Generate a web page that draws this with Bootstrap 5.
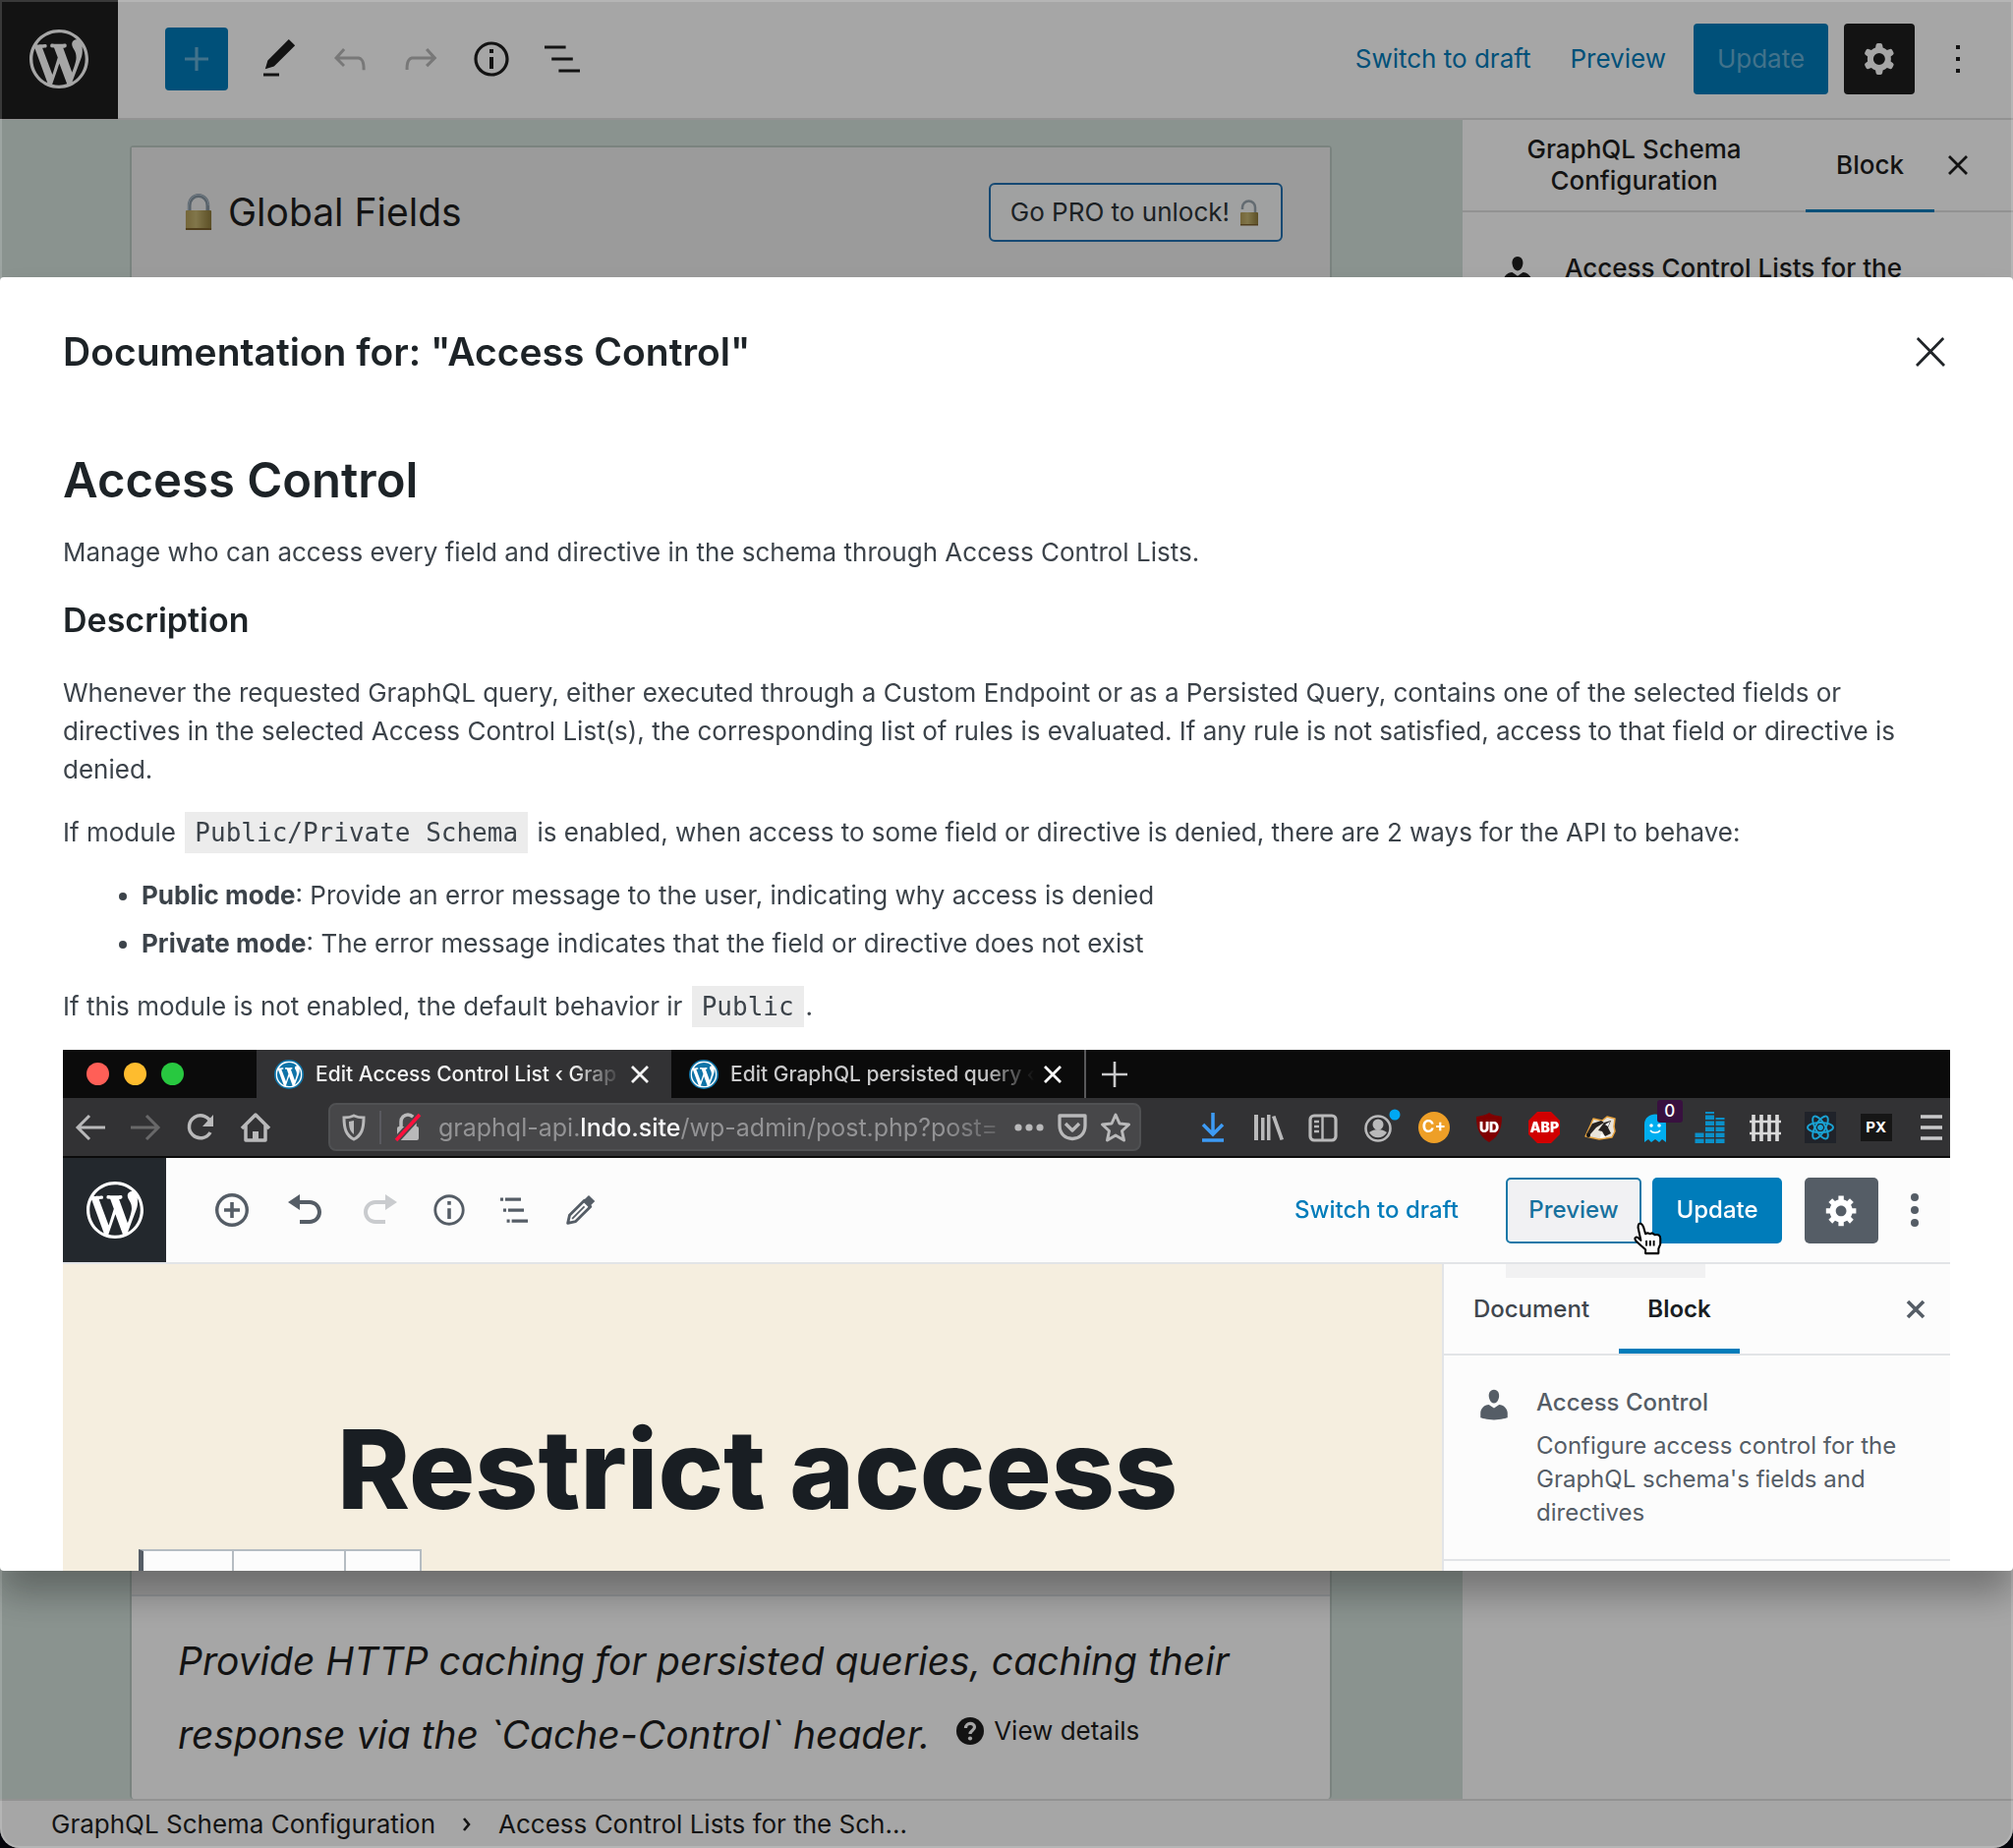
<!DOCTYPE html>
<html lang="en">
<head>
<meta charset="utf-8">
<meta name="viewport" content="width=device-width, initial-scale=1">
<title>GraphQL Schema Configuration</title>
<link href="https://cdn.jsdelivr.net/npm/bootstrap@5.3.0/dist/css/bootstrap.min.css" rel="stylesheet">
<style>
  :root { --wp-blue: #007cba; --ink: #1e1e1e; --line: #e0e0e0; }
  html { background: #05060c; }
  body { font-family: Inter, "Liberation Sans", sans-serif; font-size: 26px; line-height: 32px; color: var(--ink); background: #05060c; overflow: hidden; }
  svg { display: block; flex: none; fill: currentColor; }
  .i48 { width: 48px; height: 48px; }
  .stroke { fill: none; stroke: currentColor; }
  button, a { font-size: inherit; }
  .plain { border: 0; background: none; padding: 0; color: inherit; display: flex; align-items: center; justify-content: center; line-height: inherit; }
  a { color: var(--wp-blue); text-decoration: none; }

  /* editor */
  .editor { min-height: 100vh; background: #fff; }
  .topbar { height: 122px; border-bottom: 2px solid var(--line); }
  .wp-home { width: 120px; height: 122px; background: var(--ink); color: #fff; }
  .wp-home svg { width: 60px; height: 60px; }
  .tools { padding-left: 48px; gap: 8px; }
  .tools button { width: 64px; height: 64px; }
  .tools .add { background: var(--wp-blue); color: #66b0d6; border-radius: 4px; margin-right: 12px; }
  .tools .off { color: #b8b8b8; }
  .actions { padding-right: 32px; }
  .actions .update { width: 137px; height: 72px; background: var(--wp-blue); color: #66b0d6; border-radius: 4px; }
  .actions .settings { width: 72px; height: 72px; background: var(--ink); color: #fff; border-radius: 4px; }
  .canvas { background: #d4e2dc; padding: 26px 133px 0 132px; }
  .block-box { border: 2px solid #bccac4; border-bottom: 0; border-radius: 4px; background: #fff; }
  .block-head { background: #efefef; }
  .block-title { font-size: 39px; line-height: 48px; gap: 16px; padding: 36px 48px 36px 54px; }
  .pro { height: 60px; border: 2px solid #2271b1; border-radius: 6px; background: #f6f7f7; color: #2c3338; font-size: 26px; gap: 10px; padding: 0 22px 0 20px; }
  .block-copy { font-size: 39px; line-height: 75px; font-style: italic; padding: 28px 47px; }
  .details-link { font-size: 26px; font-style: normal; color: var(--ink); margin-left: 16px; vertical-align: 4px; gap: 10px; line-height: 32px; }
  .side { width: 560px; }
  .side-tabs { height: 94px; border-bottom: 2px solid var(--line); padding-right: 32px; }
  .side-tabs button { font-weight: 500; }
  .side-tabs .on { width: 131px; margin-bottom: -2px; border-bottom: 3px solid var(--wp-blue); }
  .side-tabs .shut { width: 48px; }
  .side-block { padding: 41px 32px; gap: 28px; font-weight: 500; }
  .crumbs { height: 50px; border-top: 2px solid var(--line); padding: 0 52px; gap: 24px; }
  .crumbs a { color: var(--ink); }

  /* dialog */
  .shade { position: fixed; inset: 0; background: rgba(0,0,0,.35); z-index: 5; border-radius: 0 0 20px 20px; box-shadow: inset 0 0 0 2px rgba(255,255,255,.16), 0 0 0 40px #05060c; }
  .doc { position: fixed; top: 15%; left: 0; right: 0; height: 70%; z-index: 6; background: #fff; border-radius: 4px; box-shadow: 0 24px 36px rgba(0,0,0,.3); overflow: hidden; color: #3c434a; }
  .doc-head { height: 152px; padding: 0 60px 0 64px; color: #1d2327; }
  .doc-head h1 { font-size: 39px; line-height: 48px; font-weight: 600; }
  .doc-body { padding: 24px 64px 0; line-height: 39px; }
  .doc-body h2 { font-size: 49px; line-height: 62px; font-weight: 600; margin: 0 0 22px; color: #1d2327; }
  .doc-body h3 { font-size: 34px; line-height: 44px; font-weight: 600; margin: 28px 0 32px; color: #1d2327; }
  .doc-body p, .doc-body ul { margin-bottom: 25px; }
  .doc-body ul { padding-left: 80px; }
  .doc-body li + li { margin-top: 10px; }
  .doc-body code { font-family: "DejaVu Sans Mono", monospace; font-size: 26px; line-height: 1; color: #3c434a; background: #ececec; padding: 6px 10px; margin: 0 2px; }

  /* illustration in the documentation */
  .shot { color: #555d66; line-height: 34px; font-size: 24px; }
  .tabstrip { height: 49px; background: #0b0b0b; color: #c9c9ca; font-size: 21px; }
  .lights { width: 197px; padding-left: 24px; gap: 15px; }
  .lights i { width: 23px; height: 23px; border-radius: 50%; }
  .tab { width: 422px; padding: 0 22px 0 18px; gap: 12px; }
  .tab.on { background: #323234; color: #f4f4f4; }
  .tab + .tab { border-right: 2px solid #58585a; }
  .tab span { flex: 1; min-width: 0; margin-right: -10px; white-space: nowrap; font-weight: 500; -webkit-mask-image: linear-gradient(90deg,#000 82%,transparent 98%); mask-image: linear-gradient(90deg,#000 82%,transparent 98%); }
  .navline { height: 61px; background: #323234; border-bottom: 2px solid #0b0b0b; color: #b9b9ba; padding: 0 3px 0 12px; }
  .navline .nav-buttons { gap: 24px; width: 258px; }
  .i32 { width: 32px; height: 32px; }
  .urlbox { width: 827px; height: 49px; background: #474749; border: 2px solid #505153; border-radius: 8px; gap: 12px; padding: 0 8px 0 10px; }
  .urlbox .address { font-size: 25px; padding-left: 4px; color: #939395; white-space: nowrap; flex: 1; min-width: 0; -webkit-mask-image: linear-gradient(90deg,#000 90%,transparent 104%); mask-image: linear-gradient(90deg,#000 90%,transparent 104%); }
  .urlbox .address b { font-weight: 500; color: #f9f9fa; }
  .bar-sep { width: 2px; height: 34px; background: #59595f; }
  .ext { margin-left: 57px; }
  .ext > span { width: 32px; height: 32px; position: relative; display: flex; align-items: center; justify-content: center; font-weight: 700; color: #fff; line-height: 1; }
  .ext .cplus { background: #ee9f27; border-radius: 50%; font-size: 17px; }
  .ext .px { background: #161616; font-size: 15px; height: 28px; }
  .ext .count { position: absolute; left: 18px; top: -12px; width: 26px; height: 23px; background: #38103f; border-radius: 3px; font-size: 17px; line-height: 23px; text-align: center; font-weight: 500; }
  .ext .over { position: absolute; inset: 0; display: flex; align-items: center; justify-content: center; font-size: 14px; }
  .shot-bar { height: 108px; background: #fcfcfc; border-bottom: 2px solid #e2e4e7; }
  .shot-home { width: 105px; height: 106px; background: #23282d; color: #fff; }
  .shot-home svg { width: 58px; height: 58px; }
  .shot-tools { padding-left: 47px; gap: 35px; }
  .shot-tools svg { width: 40px; height: 40px; }
  .shot-tools .i32 { width: 32px; height: 32px; overflow: visible; }
  .shot-actions { font-weight: 500; padding-right: 16px; }
  .shot-actions .preview { position: relative; width: 138px; height: 67px; border: 2px solid #1a78a8; border-radius: 5px; background: #f1f1f3; color: #17719e; font-weight: 500; }
  .shot-actions .upd { width: 132px; height: 67px; border-radius: 5px; background: var(--wp-blue); color: #fff; margin: 0 23px 0 11px; font-weight: 500; }
  .shot-actions .cog { width: 75px; height: 67px; border-radius: 5px; background: #555d66; color: #fff; margin-right: 17px; }
  .pointer { position: absolute; left: 126px; top: 43px; width: 32px; height: 34px; }
  .shot-page { background: #f5eedf; padding-top: 146px; }
  .shot-page h4 { font-size: 112px; line-height: 124px; font-weight: 800; color: #191e23; margin: 0 0 20px 279px; }
  .cells { margin-left: 77px; width: 288px; height: 60px; border: 2px solid #b5bcc2; border-left: 5px solid #555d66; background: #fcfcfc; }
  .cells i { border-right: 2px solid #b5bcc2; width: 92px; }
  .cells i + i { width: 114px; }
  .shot-side { width: 517px; background: #fcfcfc; border-left: 2px solid #e2e4e7; }
  .shot-side .tip { position: absolute; left: 63px; top: 0; width: 203px; height: 14px; background: #f1f1f2; }
  .shot-tabs { height: 93px; border-bottom: 2px solid #e2e4e7; padding: 0 16px 0 0; position: relative; }
  .shot-tabs .doctab { width: 178px; color: #40464d; font-weight: 500; }
  .shot-tabs .blocktab { width: 123px; font-weight: 600; color: #191e23; border-bottom: 5px solid var(--wp-blue); border-top: 5px solid transparent; }
  .shot-info { padding: 31px 40px 30px 32px; gap: 24px; border-bottom: 2px solid #e2e4e7; }
  .shot-info strong { font-weight: 500; display: block; margin-bottom: 10px; }
</style>
<script src="https://cdn.jsdelivr.net/npm/bootstrap@5.3.0/dist/js/bootstrap.bundle.min.js"></script>
</head>
<body>
<svg width="0" height="0" class="position-absolute" aria-hidden="true">
  <symbol id="wp" viewBox="0 0 20 20"><path d="M20 10c0-5.51-4.49-10-10-10C4.48 0 0 4.49 0 10c0 5.52 4.48 10 10 10 5.51 0 10-4.48 10-10zM7.78 15.37L4.37 6.22c.55-.02 1.17-.08 1.17-.08.5-.06.44-1.13-.06-1.11 0 0-1.45.11-2.37.11-.18 0-.37 0-.58-.01C4.12 2.69 6.87 1.11 10 1.11c2.33 0 4.45.87 6.05 2.34-.68-.11-1.65.39-1.65 1.58 0 .74.45 1.36.9 2.1.35.61.55 1.36.55 2.46 0 1.49-1.4 5-1.4 5l-3.03-8.37c.54-.02.82-.17.82-.17.5-.05.44-1.25-.06-1.22 0 0-1.44.12-2.38.12-.87 0-2.33-.12-2.33-.12-.5-.03-.56 1.2-.06 1.22l.92.08 1.26 3.41zM17.41 10c.24-.64.74-1.87.43-4.25.7 1.29 1.05 2.71 1.05 4.25 0 3.29-1.73 6.24-4.4 7.78.97-2.59 1.94-5.2 2.92-7.78zM6.1 18.09C3.12 16.65 1.11 13.53 1.11 10c0-1.3.23-2.48.72-3.59C3.25 10.3 4.67 14.2 6.1 18.09zm4.03-6.63l2.58 6.98c-.86.29-1.76.45-2.71.45-.79 0-1.57-.11-2.29-.33.81-2.38 1.62-4.74 2.42-7.1z"/></symbol>
  <symbol id="close" viewBox="0 0 24 24"><path d="M13 11.8l6.1-6.3-1-1-6.1 6.2-6.1-6.2-1 1 6.1 6.3-6.5 6.7 1 1 6.5-6.6 6.5 6.6 1-1z"/></symbol>
  <symbol id="user" viewBox="0 0 20 20"><path d="M10 9.25c-2.27 0-2.73-3.44-2.73-3.44C7 4.02 7.82 2 9.97 2c2.16 0 2.98 2.02 2.71 3.81 0 0-.41 3.44-2.68 3.44zm0 2.57L12.72 10c2.39 0 4.52 2.33 4.52 4.53v2.49s-3.65 1.13-7.24 1.13c-3.65 0-7.24-1.13-7.24-1.13v-2.49c0-2.25 1.94-4.48 4.47-4.48z"/></symbol>
  <symbol id="info" viewBox="0 0 24 24"><path d="M12 3.2c-4.8 0-8.8 3.9-8.8 8.8 0 4.8 3.9 8.8 8.8 8.8 4.8 0 8.8-3.9 8.8-8.8 0-4.8-4-8.8-8.8-8.8zm0 16c-4 0-7.2-3.3-7.2-7.2C4.8 8 8 4.8 12 4.8s7.2 3.3 7.2 7.2c0 4-3.2 7.2-7.2 7.2zM11 17h2v-6h-2v6zm0-8h2V7h-2v2z"/></symbol>
  <linearGradient id="brass"><stop offset="0" stop-color="#b39d58"/><stop offset=".4" stop-color="#c7b673"/><stop offset="1" stop-color="#8d7a3a"/></linearGradient>
</svg>

<div class="editor d-flex flex-column">
  <header class="topbar d-flex align-items-center">
    <a href="#" class="wp-home d-flex align-items-center justify-content-center" aria-label="Dashboard"><svg><use href="#wp"/></svg></a>
    <div class="tools d-flex align-items-center me-auto">
      <button class="plain add" aria-label="Add block"><svg class="i48" viewBox="0 0 24 24"><path d="M18 11.2h-5.2V6h-1.6v5.2H6v1.6h5.2V18h1.6v-5.2H18z"/></svg></button>
      <button class="plain" aria-label="Edit"><svg class="i48" viewBox="0 0 24 24"><path d="M20.1 5.1L16.9 2 6.2 12.7l-1.3 4.4 4.5-1.3L20.1 5.1zM4 20.8h8v-1.5H4v1.5z"/></svg></button>
      <button class="plain off" aria-label="Undo"><svg class="i48" viewBox="0 0 24 24"><path d="M18.3 11.7c-.6-.6-1.4-.9-2.3-.9H6.7l2.9-3.3-1.1-1-4.5 5L8.5 16l1-1-2.7-2.7H16c.5 0 .9.2 1.3.5 1 1 1 3.4 1 4.5v.3h1.5v-.2c0-1.5 0-4.3-1.5-5.7z"/></svg></button>
      <button class="plain off" aria-label="Redo"><svg class="i48" viewBox="0 0 24 24"><path d="M15.6 6.5l-1.1 1 2.9 3.3H8c-.9 0-1.7.3-2.3.9-1.4 1.5-1.4 4.2-1.4 5.6v.2h1.5v-.3c0-1.1 0-3.5 1-4.5.3-.3.7-.5 1.3-.5h9.2L14.5 15l1.1 1.1 4.6-4.6-4.6-5z"/></svg></button>
      <button class="plain" aria-label="Details"><svg class="i48"><use href="#info"/></svg></button>
      <button class="plain" aria-label="List view"><svg class="i48" viewBox="0 0 24 24"><path d="M13.8 5.2H3v1.5h10.8V5.2zm-3.6 12v1.5H21v-1.5H10.2zm7.2-6H6.6v1.5h10.8v-1.5z"/></svg></button>
    </div>
    <div class="actions d-flex align-items-center">
      <a href="#" class="me-4 pe-3">Switch to draft</a>
      <a href="#" class="me-4 pe-1">Preview</a>
      <button class="plain update me-3">Update</button>
      <button class="plain settings" aria-label="Settings"><svg class="i48" viewBox="0 0 24 24"><path fill-rule="evenodd" d="M10.289 4.836A1 1 0 0111.275 4h1.306a1 1 0 01.987.836l.244 1.466c.787.26 1.503.679 2.108 1.218l1.393-.522a1 1 0 011.216.437l.653 1.13a1 1 0 01-.23 1.273l-1.148.944a6.025 6.025 0 010 2.435l1.149.946a1 1 0 01.23 1.272l-.653 1.13a1 1 0 01-1.216.437l-1.394-.522c-.605.54-1.32.958-2.108 1.218l-.244 1.466a1 1 0 01-.987.836h-1.306a1 1 0 01-.986-.836l-.244-1.466a5.995 5.995 0 01-2.108-1.218l-1.394.522a1 1 0 01-1.217-.436l-.653-1.131a1 1 0 01.23-1.272l1.149-.946a6.026 6.026 0 010-2.435l-1.148-.944a1 1 0 01-.23-1.272l.653-1.131a1 1 0 011.217-.437l1.393.522a5.994 5.994 0 012.108-1.218l.244-1.466zM14.929 12a3 3 0 11-6 0 3 3 0 016 0z"/></svg></button>
      <button class="plain ms-3 ps-1" aria-label="Options"><svg class="i48" viewBox="0 0 24 24"><path d="M13 19h-2v-2h2v2zm0-6h-2v-2h2v2zm0-6h-2V5h2v2z"/></svg></button>
    </div>
  </header>

  <div class="d-flex flex-grow-1">
    <main class="canvas flex-grow-1 d-flex flex-column">
      <div class="block-box flex-grow-1 d-flex flex-column">
        <div class="block-head flex-grow-1 border-bottom border-2">
          <div class="block-title d-flex align-items-center">
            <svg width="28" height="38" viewBox="0 0 30 38" preserveAspectRatio="none"><path d="M5 20V12a10 10 0 0 1 20 0v8" fill="none" stroke="#8797a3" stroke-width="4"/><path d="M4 20V12a11 11 0 0 1 22 0" fill="none" stroke="#b3c3d0" stroke-width="1"/><rect x="1" y="17" width="28" height="20" rx="1" fill="url(#brass)"/><path d="M1 35h28v2H1z" fill="#7a5f2b"/></svg>
            <span class="me-auto">Global Fields</span>
            <button class="plain pro">Go PRO to unlock!
              <svg width="20" height="27" viewBox="0 0 20 27"><path d="M3 10V8a6 6 0 0 1 13 0v6" fill="none" stroke="#98a5ae" stroke-width="2.5"/><rect x="1" y="13" width="18" height="13" rx="1" fill="url(#brass)"/><path d="M1 25h18v1.500H1z" fill="#7a5f2b"/></svg>
            </button>
          </div>
        </div>
        <div class="block-copy">Provide HTTP caching for persisted queries, caching their<br>response via the `Cache-Control` header.
          <a href="#" class="details-link d-inline-flex align-items-center"><svg width="28" height="28" viewBox="0 0 28 28"><circle cx="14" cy="14" r="14"/><path d="M9.500 11c0-6 9-6 9-1 0 3.500-4.500 3.500-4.500 7" fill="none" stroke="#fff" stroke-width="3.200"/><circle cx="14" cy="21.500" r="2.100" fill="#fff"/></svg>View details</a>
        </div>
      </div>
    </main>
    <aside class="side">
      <div class="side-tabs d-flex">
        <button class="plain flex-grow-1 text-center">GraphQL Schema<br>Configuration</button>
        <button class="plain on">Block</button>
        <button class="plain shut" aria-label="Close settings"><svg width="22" height="22" viewBox="0 0 22 22" class="stroke"><path d="M2 2l18 18M20 2L2 20" stroke-width="2.800"/></svg></button>
      </div>
      <div class="side-block d-flex">
        <svg width="40" height="40" class="ms-1"><use href="#user"/></svg>
        <span>Access Control Lists for the</span>
      </div>
    </aside>
  </div>

  <nav class="crumbs d-flex align-items-center" aria-label="Block breadcrumb">
    <a href="#">GraphQL Schema Configuration</a>
    <svg width="16" height="16" viewBox="0 0 16 16" class="stroke"><path d="M5 2l5 6-5 6" stroke-width="2.600"/></svg>
    <a href="#">Access Control Lists for the Sch...</a>
  </nav>
</div>

<div class="shade"></div>
<section class="doc" role="dialog" aria-modal="true" aria-labelledby="docTitle">
  <header class="doc-head d-flex align-items-center justify-content-between">
    <h1 id="docTitle" class="m-0">Documentation for: "Access Control"</h1>
    <button class="plain text-dark" aria-label="Close"><svg class="i48"><use href="#close"/></svg></button>
  </header>
  <div class="doc-body">
    <h2>Access Control</h2>
    <p>Manage who can access every field and directive in the schema through Access Control Lists.</p>
    <h3>Description</h3>
    <p>Whenever the requested GraphQL query, either executed through a Custom Endpoint or as a Persisted Query, contains one of the selected fields or directives in the selected Access Control List(s), the corresponding list of rules is evaluated. If any rule is not satisfied, access to that field or directive is denied.</p>
    <p>If module <code>Public/Private Schema</code> is enabled, when access to some field or directive is denied, there are 2 ways for the API to behave:</p>
    <ul>
      <li><strong>Public mode</strong>: Provide an error message to the user, indicating why access is denied</li>
      <li><strong>Private mode</strong>: The error message indicates that the field or directive does not exist</li>
    </ul>
    <p>If this module is not enabled, the default behavior ir <code>Public</code>.</p>

    <figure class="shot m-0">
      <div class="tabstrip d-flex align-items-stretch">
        <div class="lights d-flex align-items-center"><i style="background:#ff5f57"></i><i style="background:#febc2e"></i><i style="background:#28c840"></i></div>
        <div class="tab on d-flex align-items-center"><svg width="30" height="30" viewBox="0 0 20 20"><circle cx="10" cy="10" r="10" fill="#0f74a8"/><use href="#wp" x="1" y="1" width="18" height="18" fill="#fff"/></svg><span>Edit Access Control List ‹ Grap</span><svg width="20" height="20" viewBox="0 0 20 20" class="stroke"><path d="M2 2l16 16M18 2L2 18" stroke-width="2.800"/></svg></div>
        <div class="tab d-flex align-items-center"><svg width="30" height="30" viewBox="0 0 20 20"><circle cx="10" cy="10" r="10" fill="#0f74a8"/><use href="#wp" x="1" y="1" width="18" height="18" fill="#fff"/></svg><span>Edit GraphQL persisted query ‹</span><svg width="20" height="20" viewBox="0 0 20 20" class="stroke text-white"><path d="M2 2l16 16M18 2L2 18" stroke-width="2.800"/></svg></div>
        <div class="d-flex align-items-center ps-3"><svg width="26" height="26" viewBox="0 0 26 26" class="stroke"><path d="M13 0v26M0 13h26" stroke-width="2.600"/></svg></div>
      </div>
      <div class="navline d-flex align-items-center">
        <div class="nav-buttons d-flex">
          <svg class="i32 stroke" viewBox="0 0 32 32"><path d="M31 16H3M15 4L3 16l12 12" stroke-width="3"/></svg>
          <svg class="i32 stroke" viewBox="0 0 32 32" opacity=".4"><path d="M1 16h28M17 4l12 12-12 12" stroke-width="3"/></svg>
          <svg class="i32 stroke" viewBox="0 0 32 32"><path d="M26 21a11.500 11.500 0 1 1 1-9" stroke-width="3.500"/><path d="M29 3v12H18z" fill="currentColor" stroke="none"/></svg>
          <svg class="i32 stroke" viewBox="0 0 32 32"><path d="M2 17L16 3l14 14M6 14v15h20V14" stroke-width="3.500" stroke-linejoin="round"/><path d="M13 29v-9h6v9z" fill="currentColor" stroke="none"/></svg>
        </div>
        <div class="urlbox d-flex align-items-center">
          <svg width="28" height="28" viewBox="0 0 28 28" class="stroke"><path d="M14 2c3 1.500 6 2 10 2 0 11-2 18-10 22C6 22 4 15 4 4c4 0 7-.5 10-2z" stroke-width="3"/><path d="M14 7v14c-4-3-5-7-5-13z" fill="currentColor" stroke="none"/></svg>
          <i class="bar-sep"></i>
          <svg width="30" height="30" viewBox="0 0 30 30"><path d="M8 15V9a7 7 0 0 1 14 0v5" fill="none" stroke="currentColor" stroke-width="3.500"/><rect x="4" y="14" width="22" height="14" rx="2"/><path d="M3 28L27 2" stroke="#474749" stroke-width="7"/><path d="M3 28L27 2" stroke="#ff0f3c" stroke-width="3.500"/></svg>
          <span class="address">graphql-api.<b>lndo.site</b>/wp-admin/post.php?post=</span>
          <svg class="i32" viewBox="0 0 32 32"><circle cx="5" cy="16" r="3.600"/><circle cx="16" cy="16" r="3.600"/><circle cx="27" cy="16" r="3.600"/></svg>
          <svg class="i32 stroke" viewBox="0 0 32 32"><path d="M3 4h26v10c0 18-26 18-26 0zM9 12l7 7 7-7" stroke-width="3.300" stroke-linejoin="round"/></svg>
          <svg class="i32 stroke" viewBox="0 0 32 32"><path d="M16 3l4 9 9.500 1-7 6.500 2 9.500-8.500-5-8.500 5 2-9.500-7-6.500 9.500-1z" stroke-width="3" stroke-linejoin="round"/></svg>
        </div>
        <div class="ext d-flex align-items-center justify-content-between flex-grow-1">
          <span><svg class="i32 stroke" viewBox="0 0 32 32" style="color:#3d9bf5"><path d="M16 1v22M6 13l10 10 10-10M5 29h22" stroke-width="3.500"/></svg></span>
          <span><svg class="i32" viewBox="0 0 32 32" style="color:#b9b9ba"><path d="M2 3h4v26H2zM9 6h3.500v23H9zM15 3h3.500v26H15zM20 5l3.500-1L32 28l-3.500 1z"/></svg></span>
          <span><svg class="i32 stroke" viewBox="0 0 32 32" style="color:#b9b9ba"><rect x="3" y="4" width="26" height="25" rx="4" stroke-width="3.200"/><path d="M15.500 4v25M7 10h5M7 15h5M7 20h5" stroke-width="2.400"/></svg></span>
          <span><svg class="i32" viewBox="0 0 32 32" style="color:#b9b9ba;overflow:visible"><circle cx="15" cy="17" r="12.500" fill="none" stroke="currentColor" stroke-width="2.600"/><circle cx="15" cy="13" r="5.500"/><path d="M6 21c5-4 13-4 18 0-4 7-14 7-18 0z"/><circle cx="32" cy="3" r="5.500" fill="#00a8f3"/></svg></span>
          <span class="cplus">C+</span>
          <span><svg class="i32" viewBox="0 0 32 32"><path d="M16 1c4 3 9 3 13 4 0 12-3 20-13 26C6 25 3 17 3 5c4-1 9-1 13-4z" fill="#800000"/></svg><b class="over">UD</b></span>
          <span><svg class="i32" viewBox="0 0 32 32"><path d="M9 0h14l9 9v14l-9 9H9l-9-9V9z" fill="#d10000"/></svg><b class="over">ABP</b></span>
          <span><svg class="i32" viewBox="0 0 32 32"><path d="M1 25l5-11 3-7 9 2 5-4 8 2-1 8 1 5-3 6-13 2z" fill="#e9e4da" stroke="#e5a13d" stroke-width="1.500" stroke-linejoin="round"/><path d="M2 23l6-11 9-3 3 2-8 5-7 8z" fill="#272220"/><path d="M14 19l6-8 7-2-3 7 3 6-6 3-3-5z" fill="#272220"/><path d="M21 13l5-3-2 5zM17 22l5 4-6 1z" fill="#fff"/><circle cx="4" cy="24" r="2" fill="#111"/></svg></span>
          <span><svg class="i32" viewBox="0 0 32 32"><path d="M5 31V13C5 -1 27 -1 27 13v18l-4-3-3 3-4-3-4 3-3-3z" fill="#00aef0"/><circle cx="12" cy="14" r="1.800" fill="#fff"/><circle cx="20" cy="14" r="1.800" fill="#fff"/><path d="M11 19c2 3 8 3 10 0" fill="none" stroke="#fff" stroke-width="1.600"/></svg><b class="count">0</b></span>
          <span><svg class="i32 stroke" viewBox="0 0 32 32" style="color:#0a90c9"><path d="M5 32V20M15.500 32V0M26 32V6" stroke-width="9" stroke-dasharray="4.500 1.500"/></svg></span>
          <span><svg class="i32 stroke" viewBox="0 0 32 32" style="color:#d9d9d9"><path d="M4 3v27M12 3v27M20 3v27M28 3v27" stroke-width="3.600"/><path d="M0 10h32M0 22h32" stroke-width="2.600"/></svg></span>
          <span style="background:#20232a"><svg class="i32 stroke" viewBox="0 0 32 32" style="color:#1aa3d4"><g stroke-width="1.900"><ellipse cx="16" cy="16" rx="13" ry="5"/><ellipse cx="16" cy="16" rx="13" ry="5" transform="rotate(60 16 16)"/><ellipse cx="16" cy="16" rx="13" ry="5" transform="rotate(120 16 16)"/></g><circle cx="16" cy="16" r="2.500" fill="currentColor"/></svg></span>
          <span class="px">PX</span>
          <span><svg class="i32 stroke" viewBox="0 0 32 32" style="color:#c9c9ca"><path d="M5 5h22M5 16h22M5 27h22" stroke-width="3.600"/></svg></span>
        </div>
      </div>
      <div class="shot-bar d-flex align-items-center">
        <div class="shot-home d-flex align-items-center justify-content-center"><svg><use href="#wp"/></svg></div>
        <div class="shot-tools d-flex align-items-center me-auto">
          <svg viewBox="0 0 20 20"><path d="M10 1.500a8.500 8.500 0 1 0 0 17 8.500 8.500 0 0 0 0-17zm0 15.300a6.800 6.800 0 1 1 0-13.600 6.800 6.800 0 0 1 0 13.600zM10.900 6H9.100v3.100H6v1.800h3.100V14h1.800v-3.100H14V9.100h-3.100z"/></svg>
          <svg viewBox="0 0 20 20"><path d="M12 5H7V2L1 6l6 4V7h5c2.200 0 4 1.800 4 4s-1.800 4-4 4H7v2h5c3.300 0 6-2.700 6-6s-2.700-6-6-6z"/></svg>
          <svg viewBox="0 0 20 20" opacity=".3"><path d="M8 5h5V2l6 4-6 4V7H8c-2.200 0-4 1.800-4 4s1.800 4 4 4h5v2H8c-3.300 0-6-2.700-6-6s2.700-6 6-6z"/></svg>
          <svg class="i32" viewBox="3 3 18 18"><use href="#info" width="24" height="24"/></svg>
          <svg class="i32" viewBox="2 2 16 16"><path d="M2.500 3.700h1.500v1.700H2.500zM5 3.700h8v1.700H5zM4 9.200h1.500v1.700H4zM6.500 9.200h8v1.700h-8zM5.800 14.700h1.500v1.700H5.800zM8.300 14.700h8.200v1.700H8.300z"/></svg>
          <svg class="i32" viewBox="2 1 18 18"><path d="M3.500 17.500l1-4.500 8.500-8.500 3.500 3.500L8 16.500z" fill="none" stroke="currentColor" stroke-width="1.600" stroke-linejoin="round"/><path d="M12 5l3.500-3.500L19 5l-3.500 3.500z"/><path d="M6 15l7-7" fill="none" stroke="currentColor" stroke-width="1"/></svg>
        </div>
        <div class="shot-actions d-flex align-items-center">
          <a href="#" class="me-5">Switch to draft</a>
          <button class="plain preview">Preview
            <svg class="pointer" viewBox="0 0 32 36"><path d="M7 2c3-1 4 1 5 4l2 7 2-1 3 1 2-1 3 2c4-1 6 1 6 4v6l-2 5v5H14v-4L4 21c-3-4 0-6 3-3l2 2L6 6c0-2 0-3 1-4z" fill="#fff" stroke="#000" stroke-width="2.200" stroke-linejoin="round"/><path d="M15 20v6M19 20v6M23 20v6" stroke="#000" stroke-width="2"/></svg>
          </button>
          <button class="plain upd">Update</button>
          <button class="plain cog" aria-label="Settings"><svg width="36" height="36" viewBox="0 0 20 20"><path d="M18 12h-2.180c-.17.7-.44 1.350-.81 1.930l1.540 1.540-2.100 2.100-1.540-1.540c-.58.36-1.230.63-1.910.79V19H8v-2.180c-.68-.16-1.330-.43-1.910-.79l-1.540 1.540-2.120-2.120 1.540-1.540c-.36-.58-.63-1.230-.79-1.910H1V9.030h2.170c.16-.7.44-1.350.8-1.940L2.430 5.550l2.100-2.100 1.540 1.540c.58-.37 1.240-.64 1.930-.81V2h3v2.180c.68.16 1.330.43 1.910.79l1.540-1.540 2.120 2.120-1.540 1.540c.36.59.64 1.240.8 1.940H18V12zm-8.500 1.500c1.660 0 3-1.340 3-3s-1.340-3-3-3-3 1.340-3 3 1.340 3 3 3z"/></svg></button>
          <svg width="40" height="40" viewBox="0 0 40 40"><circle cx="20" cy="7" r="4"/><circle cx="20" cy="20" r="4"/><circle cx="20" cy="33" r="4"/></svg>
        </div>
      </div>
      <div class="d-flex">
        <div class="shot-page flex-grow-1">
          <h4>Restrict access</h4>
          <div class="cells d-flex"><i></i><i></i></div>
        </div>
        <div class="shot-side">
          <div class="shot-tabs d-flex">
            <div class="tip"></div>
            <button class="plain doctab">Document</button>
            <button class="plain blocktab">Block</button>
            <button class="plain ms-auto px-2" aria-label="Close"><svg width="22" height="22" viewBox="0 0 22 22" class="stroke"><path d="M3 3l16 16M19 3L3 19" stroke-width="3.600"/></svg></button>
          </div>
          <div class="shot-info d-flex">
            <svg width="38" height="38"><use href="#user"/></svg>
            <div><strong>Access Control</strong>Configure access control for the GraphQL schema's fields and directives</div>
          </div>
        </div>
      </div>
    </figure>
  </div>
</section>
</body>
</html>
